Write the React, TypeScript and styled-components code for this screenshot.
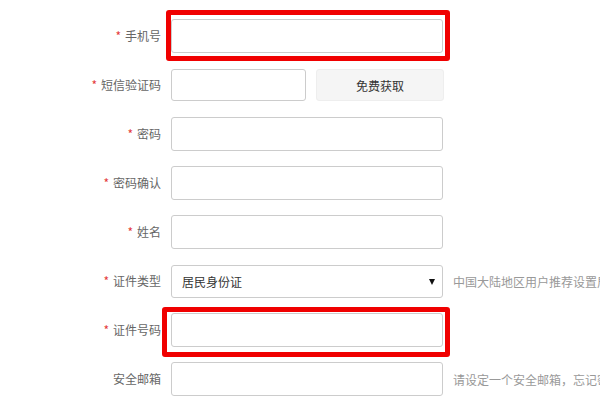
import styled, { createGlobalStyle } from 'styled-components';

const GlobalStyle = createGlobalStyle`
  html, body {
    margin: 0;
    padding: 0;
    background: #fff;
    overflow: hidden;
  }
  body {
    font-family: "Noto Sans CJK SC", "Noto Sans", sans-serif;
    font-size: 12px;
    color: #666;
  }
`;

const Form = styled.form`
  display: flex;
  flex-direction: column;
  gap: 15px;
  padding-top: 19px;
  width: 600px;
  overflow: hidden;
`;

const Row = styled.div`
  display: flex;
  align-items: center;
  height: 34px;
`;

const Label = styled.label`
  flex: 0 0 171px;
  padding-right: 10px;
  box-sizing: border-box;
  text-align: right;
  font-size: 12px;
  line-height: 16px;
  color: #666;
  white-space: nowrap;
`;

const Star = styled.span`
  color: #e4393c;
  margin-right: 4px;
`;

const Input = styled.input<{ $width?: number; $height?: number }>`
  flex: 0 0 auto;
  box-sizing: border-box;
  width: ${(p) => p.$width ?? 272}px;
  height: ${(p) => p.$height ?? 34}px;
  padding: 0 10px;
  border: 1px solid #ccc;
  border-radius: 3px;
  background: #fff;
  font-family: inherit;
  font-size: 12px;
  color: #333;
  outline: none;
`;

// red annotation frame drawn over the field
const Highlight = styled.div<{ $left: number; $top: number; $right: number; $bottom: number }>`
  position: relative;
  display: flex;
  flex: 0 0 auto;

  &::before {
    content: '';
    position: absolute;
    left: ${(p) => p.$left}px;
    top: ${(p) => p.$top}px;
    right: ${(p) => p.$right}px;
    bottom: ${(p) => p.$bottom}px;
    border: 5px solid #f00000;
    border-radius: 3px;
    pointer-events: none;
  }
`;

const CodeButton = styled.button`
  flex: 0 0 auto;
  box-sizing: border-box;
  width: 128px;
  height: 32px;
  margin-left: 10px;
  border: 1px solid #eee;
  border-radius: 3px;
  background: #f5f5f5;
  font-family: inherit;
  font-size: 12px;
  color: #333;
  cursor: pointer;
`;

const SelectBox = styled.div`
  position: relative;
  display: flex;
  flex: 0 0 auto;

  &::after {
    content: '';
    position: absolute;
    right: 8px;
    top: 14px;
    border-left: 3px solid transparent;
    border-right: 3px solid transparent;
    border-top: 6px solid #111;
    pointer-events: none;
  }
`;

const Select = styled.select`
  box-sizing: border-box;
  width: 272px;
  height: 33px;
  padding: 0 0 0 10px;
  border: 1px solid #ccc;
  border-radius: 3px;
  background: #fff;
  font-family: inherit;
  font-size: 12px;
  color: #333;
  appearance: none;
  outline: none;
`;

const Hint = styled.span`
  flex: 1 1 0;
  min-width: 0;
  margin-left: 10px;
  font-size: 12px;
  color: #999;
  white-space: nowrap;
  overflow: hidden;
`;

export default function App() {
  return (
    <>
      <GlobalStyle />
      <Form>
        <Row>
          <Label><Star>*</Star>手机号</Label>
          <Highlight $left={-5} $top={-9} $right={-7} $bottom={-8}>
            <Input />
          </Highlight>
        </Row>
        <Row>
          <Label><Star>*</Star>短信验证码</Label>
          <Input $width={135} $height={32} />
          <CodeButton type="button">免费获取</CodeButton>
        </Row>
        <Row>
          <Label><Star>*</Star>密码</Label>
          <Input type="password" />
        </Row>
        <Row>
          <Label><Star>*</Star>密码确认</Label>
          <Input type="password" />
        </Row>
        <Row>
          <Label><Star>*</Star>姓名</Label>
          <Input />
        </Row>
        <Row>
          <Label><Star>*</Star>证件类型</Label>
          <SelectBox>
            <Select defaultValue="id">
              <option value="id">居民身份证</option>
              <option value="passport">护照</option>
            </Select>
          </SelectBox>
          <Hint>中国大陆地区用户推荐设置居民身份证</Hint>
        </Row>
        <Row>
          <Label><Star>*</Star>证件号码</Label>
          <Highlight $left={-9} $top={-6} $right={-7} $bottom={-10}>
            <Input />
          </Highlight>
        </Row>
        <Row>
          <Label>安全邮箱</Label>
          <Input />
          <Hint>请设定一个安全邮箱，忘记密码时可通过邮箱找回</Hint>
        </Row>
      </Form>
    </>
  );
}
